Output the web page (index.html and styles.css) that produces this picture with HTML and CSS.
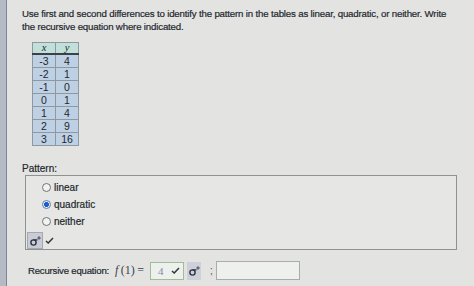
FILE: index.html
```html
<!DOCTYPE html>
<html>
<head>
<meta charset="utf-8">
<link rel="stylesheet" href="styles.css">
</head>
<body>
<div class="page">
  <div class="strip"></div>
  <main class="main">
    <p class="prompt">Use first and second differences to identify the pattern in the tables as linear, quadratic, or neither. Write the recursive equation where indicated.</p>
    <table class="data">
      <thead><tr><th><i>x</i></th><th><i>y</i></th></tr></thead>
      <tbody>
        <tr><td>-3</td><td>4</td></tr>
        <tr><td>-2</td><td>1</td></tr>
        <tr><td>-1</td><td>0</td></tr>
        <tr><td>0</td><td>1</td></tr>
        <tr><td>1</td><td>4</td></tr>
        <tr><td>2</td><td>9</td></tr>
        <tr><td>3</td><td>16</td></tr>
      </tbody>
    </table>
    <div class="label">Pattern:</div>
    <div class="box">
      <div class="opt"><span class="radio"></span><span>linear</span></div>
      <div class="opt"><span class="radio on"></span><span>quadratic</span></div>
      <div class="opt"><span class="radio"></span><span>neither</span></div>
      <div class="tools">
        <span class="keybtn"><svg width="14" height="14" viewBox="0 0 14 14"><circle cx="5.5" cy="8.5" r="2.6" fill="none" stroke="#2d3340" stroke-width="1.4"/><path d="M5.5 5.9 H9.5" stroke="#2d3340" stroke-width="1.3"/><circle cx="11" cy="4" r="1.1" fill="none" stroke="#2d3340" stroke-width="0.9"/></svg></span>
        <svg class="check" width="9" height="7" viewBox="0 0 9 7"><path d="M1 4 L3.2 6 L8 1" fill="none" stroke="#2e3a30" stroke-width="1.5"/></svg>
      </div>
    </div>
    <div class="eqrow">
      <span class="eqlabel">Recursive equation:</span>
      <span class="math"><i>f</i>&#8201;(1)&#8201;=</span>
      <span class="inp ok"><span class="val">4</span><svg width="9" height="7" viewBox="0 0 9 7"><path d="M1 4 L3.2 6 L8 1" fill="none" stroke="#2e3a30" stroke-width="1.5"/></svg></span>
      <span class="keybtn small"><svg width="14" height="14" viewBox="0 0 14 14"><circle cx="5.5" cy="8.5" r="2.6" fill="none" stroke="#2d3340" stroke-width="1.4"/><path d="M5.5 5.9 H9.5" stroke="#2d3340" stroke-width="1.3"/><circle cx="11" cy="4" r="1.1" fill="none" stroke="#2d3340" stroke-width="0.9"/></svg></span>
      <span class="semi">;</span>
      <span class="inp wide"></span>
    </div>
  </main>
</div>
</body>
</html>
```

FILE: styles.css
```css
html, body {
  margin: 0;
  padding: 0;
  background: #e3e4e2;
}
body {
  width: 474px;
  height: 286px;
  overflow: hidden;
  font-family: "Liberation Sans Narrow", "Liberation Sans", sans-serif;
  font-size: 10px;
  color: #23272e;
}
.page {
  display: flex;
  height: 286px;
}
.strip {
  width: 6px;
  flex: none;
  background: #b5bbc5;
  border-right: 1px solid #7e8694;
}
.main {
  flex: 1;
  padding: 7px 0 0 15px;
}
.prompt {
  margin: 0;
  line-height: 13px;
  width: 432px;
  font-size: 9.7px;
  letter-spacing: -0.18px;
  -webkit-text-stroke: 0.2px #23272e;
}
.data {
  margin: 9px 0 0 10px;
  border-collapse: collapse;
  font-family: "Liberation Sans", sans-serif;
  font-size: 10.5px;
}
.data th, .data td {
  width: 22px;
  padding: 0;
  text-align: center;
  border: 1px solid #8f979f;
}
.data th {
  height: 10px;
  line-height: 10px;
  background: #c2e0da;
  border-bottom: 2px solid #3b4148;
  font-weight: normal;
  font-family: "Liberation Serif", serif;
}
.data td {
  height: 12px;
  line-height: 12px;
  background: #bed1e4;
}
.label {
  margin-top: 16px;
  line-height: 13px;
  -webkit-text-stroke: 0.2px #23272e;
}
.box {
  margin-left: 3px;
  width: 429px;
  height: 70px;
  border: 1px solid #8e9290;
  background: #e6e7e5;
  padding: 3px 0 0 1px;
  box-sizing: content-box;
  display: flex;
  flex-direction: column;
}
.opt {
  display: flex;
  align-items: center;
  height: 17px;
  padding-left: 15px;
  gap: 3px;
  -webkit-text-stroke: 0.2px #23272e;
}
.radio {
  width: 7px;
  height: 7px;
  border: 1px solid #6d7278;
  border-radius: 50%;
  background: #f2f3f1;
  box-sizing: content-box;
}
.radio.on {
  background: radial-gradient(circle, #1f5fc8 0 2.2px, #e8eef8 2.8px);
  border-color: #5f7fb8;
}
.tools {
  margin-top: auto;
  display: flex;
  align-items: flex-start;
  gap: 2px;
}
.keybtn {
  width: 16px;
  height: 17px;
  flex: none;
  background: #c9ccd5;
  border: 1px solid #a4a8b2;
  box-sizing: border-box;
  display: flex;
  align-items: center;
  justify-content: center;
}
.check {
  margin-top: 5px;
}
.eqrow {
  margin-top: 11px;
  padding-left: 6px;
  display: flex;
  align-items: center;
  height: 19px;
  white-space: nowrap;
}
.eqlabel {
  flex: none;
  width: 87px;
  font-size: 9.6px;
  letter-spacing: -0.2px;
  -webkit-text-stroke: 0.2px #23272e;
}
.math {
  flex: none;
  font-family: "Liberation Serif", serif;
  font-size: 12px;
  color: #3a3e45;
  width: 35px;
  word-spacing: 1px;
}
.inp {
  flex: none;
  height: 18px;
  border: 1px solid #a8acb0;
  background: #eef0ed;
  box-sizing: border-box;
  display: flex;
  align-items: center;
}
.inp.ok {
  width: 34px;
  border-color: #9fbe98;
  padding: 0 3px 0 7px;
  justify-content: space-between;
}
.val {
  font-family: "Liberation Serif", serif;
  font-size: 11px;
  color: #7d8da2;
}
.keybtn.small {
  width: 14px;
  height: 18px;
  margin-left: 3px;
  border: none;
  background: #cdd0d9;
}
.semi {
  flex: none;
  margin-left: 9px;
  width: 6px;
  color: #555;
}
.inp.wide {
  width: 84px;
  height: 19px;
}
```
